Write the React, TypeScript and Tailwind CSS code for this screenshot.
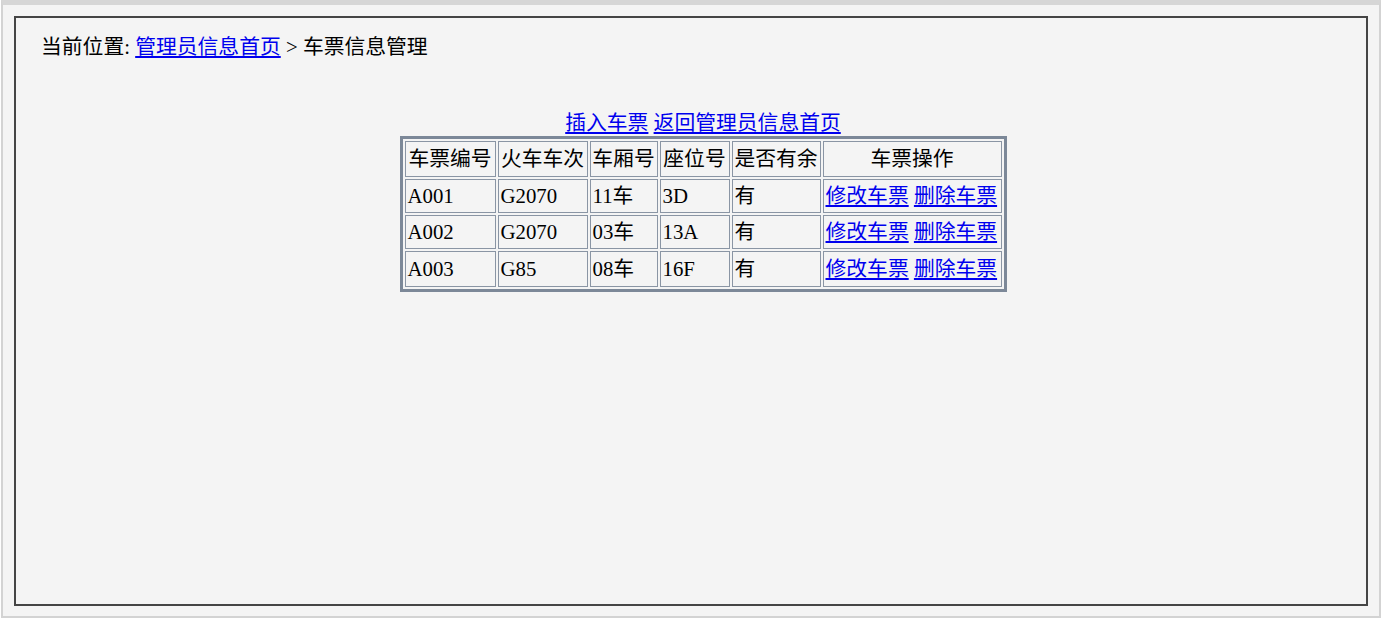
import React from "react";

const rows = [
  ["A001", "G2070", "11车", "3D", "有"],
  ["A002", "G2070", "03车", "13A", "有"],
  ["A003", "G85", "08车", "16F", "有"],
];

const widths = ["w-[91px]", "w-[90px]", "w-[68px]", "w-[70px]", "w-[89px]", "w-[179px]"];
const headers = ["车票编号", "火车车次", "车厢号", "座位号", "是否有余", "车票操作"];

export default function App() {
  const font = { fontFamily: '"Liberation Serif", "Noto Sans CJK SC", serif' };
  return (
    <div className="w-[1384px] h-[620px] bg-white overflow-hidden" style={font}>
      <div className="ml-[1px] w-[1380px] h-[618px] border-x-2 border-b-2 border-[#d3d3d3] border-t-[5px] border-t-[#d6d6d6] bg-[#f4f4f4] pt-[11px] pl-[11px]">
        <div className="w-[1354px] h-[590px] border-2 border-[#454545] pl-[25px] pr-[1px] pt-[17px] text-[20.8px] text-black">
          <div className="leading-[24px] h-[24px]">
            当前位置: <a href="#" className="text-[#0000ee] underline">管理员信息首页</a> &gt; 车票信息管理
          </div>
          <div className="mt-[52px] flex flex-col items-center">
            <div className="leading-[24px] h-[25px]">
              <a href="#" className="text-[#0000ee] underline">插入车票</a>{" "}
              <a href="#" className="text-[#0000ee] underline">返回管理员信息首页</a>
            </div>
            <table className="border-separate border-spacing-[2px] border-[3px] border-[#7c8898] table-fixed">
              <tbody>
                <tr>
                  {headers.map((h, i) => (
                    <th key={h} className={`${widths[i]} h-[36px] border border-[#8a95a4] p-0 font-normal text-center leading-[24px] whitespace-nowrap`}>
                      {h}
                    </th>
                  ))}
                </tr>
                {rows.map((r, ri) => (
                  <tr key={ri}>
                    {r.map((c, ci) => (
                      <td key={ci} className={`${widths[ci]} ${ri === 2 ? "h-[36px]" : "h-[34px]"} border border-[#8a95a4] px-[2px] py-0 text-left leading-[24px] whitespace-nowrap`}>
                        {c}
                      </td>
                    ))}
                    <td className={`${widths[5]} border border-[#8a95a4] px-[2px] py-0 text-left leading-[24px] whitespace-nowrap`}>
                      <a href="#" className="text-[#0000ee] underline">修改车票</a>{" "}
                      <a href="#" className="text-[#0000ee] underline">删除车票</a>
                    </td>
                  </tr>
                ))}
              </tbody>
            </table>
          </div>
        </div>
      </div>
    </div>
  );
}
